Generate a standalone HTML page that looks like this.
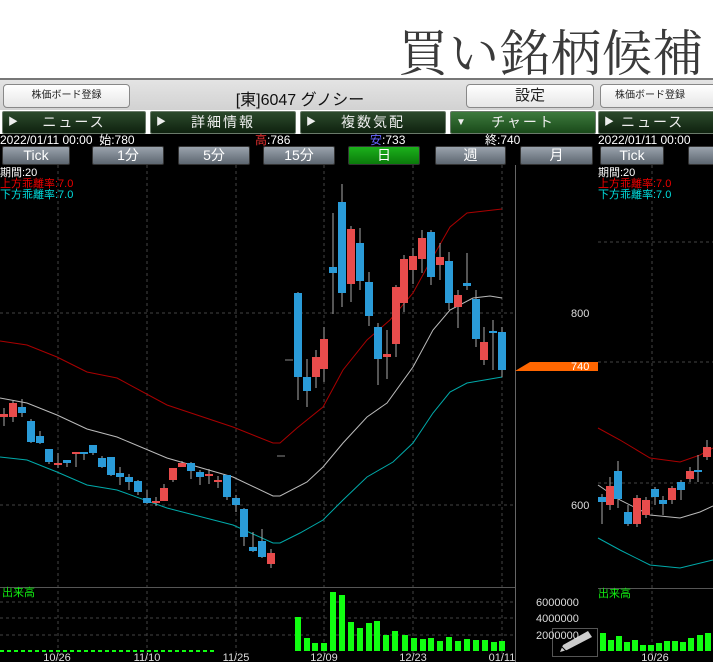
<!DOCTYPE html>
<html><head><meta charset="utf-8"><style>
*{margin:0;padding:0;box-sizing:border-box}
body{width:713px;height:662px;overflow:hidden;background:#fff;position:relative;font-family:"Liberation Sans","Noto Sans CJK JP",sans-serif}
.a{position:absolute}
.title{left:398px;top:14px;font-family:"Liberation Serif","Noto Serif CJK JP",serif;font-size:50px;color:#3a3a3a;letter-spacing:1px;white-space:nowrap}
.hdr{top:78px;height:32px;background:linear-gradient(#e4e4e4,#d2d2d2);border-top:2px solid #777}
.btn{background:linear-gradient(#fff,#e6e6e6);border:1px solid #888;border-radius:4px;color:#222;text-align:center}
.tab{top:111px;height:23px;background:linear-gradient(#2c4a2c,#0f220f);border:1px solid #6a7a6a;border-radius:2px;color:#eee;font-size:14px;line-height:21px}
.tab.on{background:linear-gradient(#3d7a3d,#1a4a1a)}
.tab i{font-style:normal;font-size:10px;position:absolute;left:5px;top:0}
.tab span{position:absolute;left:0;right:0;text-align:center;letter-spacing:2px}
.info{top:134px;height:12px;font-size:12px;line-height:12px;color:#fff;white-space:nowrap}
.pb{top:146px;height:19px;background:linear-gradient(#9aa3ad,#5d6670);border:1px solid #333;border-radius:2px;color:#fff;font-size:14px;line-height:17px;text-align:center}
.pb.on{background:linear-gradient(#1cb11c,#0b7a0b)}
.blk{background:#000}
</style></head><body>
<div class="a title">買い銘柄候補</div>
<div class="a blk" style="left:0;top:134px;width:713px;height:528px"></div>

<div class="a hdr" style="left:0;width:598px"></div>
<div class="a btn" style="left:3px;top:84px;width:127px;height:24px;font-size:10px;line-height:22px">株価ボード登録</div>
<div class="a" style="left:140px;top:86px;width:320px;text-align:center;font-size:16px;color:#111">[東]6047 グノシー</div>
<div class="a btn" style="left:466px;top:84px;width:128px;height:24px;font-size:15px;line-height:22px">設定</div>
<div class="a tab" style="left:2px;width:144px"><i>▶</i><span>ニュース</span></div>
<div class="a tab" style="left:150px;width:146px"><i>▶</i><span>詳細情報</span></div>
<div class="a tab" style="left:300px;width:146px"><i>▶</i><span>複数気配</span></div>
<div class="a tab on" style="left:450px;width:146px"><i>▼</i><span>チャート</span></div>
<div class="a info" style="left:0">2022/01/11 00:00 &nbsp;始:780</div>
<div class="a info" style="left:255px"><span style="color:#e33">高</span>:786</div>
<div class="a info" style="left:370px"><span style="color:#66f">安</span>:733</div>
<div class="a info" style="left:485px">終:740</div>
<div class="a pb" style="left:2px;width:68px">Tick</div>
<div class="a pb" style="left:92px;width:72px">1分</div>
<div class="a pb" style="left:178px;width:72px">5分</div>
<div class="a pb" style="left:263px;width:72px">15分</div>
<div class="a pb on" style="left:348px;width:72px">日</div>
<div class="a pb" style="left:435px;width:71px">週</div>
<div class="a pb" style="left:520px;width:73px">月</div>

<div class="a" style="left:598px;top:78px;width:115px;height:584px;overflow:hidden">
<div class="a hdr" style="left:0;top:0;width:115px"></div>
<div class="a btn" style="left:2px;top:6px;width:120px;height:24px;font-size:10px;line-height:22px;text-align:left;padding-left:14px">株価ボード登録</div>
<div class="a tab" style="left:0;top:33px;width:130px"><i>▶</i><span style="text-align:left;left:22px">ニュース</span></div>
<div class="a info" style="left:0;top:56px">2022/01/11 00:00</div>
<div class="a pb" style="left:2px;top:68px;width:64px">Tick</div>
<div class="a pb" style="left:90px;top:68px;width:40px"></div>
</div>

<svg class="a" style="left:0;top:0" width="713" height="662" xmlns="http://www.w3.org/2000/svg">
<rect x="0" y="165" width="713" height="497" fill="#000"/>
<g stroke="#444" stroke-dasharray="3,3" stroke-width="1">
<line x1="58" y1="165" x2="58" y2="662"/><line x1="147" y1="165" x2="147" y2="662"/><line x1="236" y1="165" x2="236" y2="662"/><line x1="324" y1="165" x2="324" y2="662"/><line x1="413" y1="165" x2="413" y2="662"/><line x1="502" y1="165" x2="502" y2="662"/>
<line x1="0" y1="313" x2="515" y2="313"/><line x1="0" y1="505" x2="515" y2="505"/>
<line x1="0" y1="602" x2="515" y2="602"/><line x1="0" y1="618" x2="515" y2="618"/><line x1="0" y1="635" x2="515" y2="635"/>
<line x1="652" y1="165" x2="652" y2="662"/><line x1="598" y1="242" x2="713" y2="242"/><line x1="598" y1="362" x2="713" y2="362"/><line x1="598" y1="483" x2="713" y2="483"/>
</g>
<line x1="515.5" y1="165" x2="515.5" y2="662" stroke="#666"/>
<line x1="0" y1="587.5" x2="515" y2="587.5" stroke="#555"/>
<line x1="598" y1="588.5" x2="713" y2="588.5" stroke="#555"/>
<line x1="0" y1="651" x2="215" y2="651" stroke="#1f1" stroke-dasharray="4,3" stroke-width="2"/>
<rect x="552.5" y="628.5" width="45" height="28" fill="none" stroke="#555"/>
<path d="M560 652 L563 645 L588 631 L592 637 L567 650 Z" fill="#ccc"/>
<line x1="562" y1="647" x2="566" y2="651" stroke="#000"/>
<g font-size="11" fill="#fff">
<text x="0" y="176">期間:20</text><text x="0" y="187" fill="#e00">上方乖離率:7.0</text><text x="0" y="198" fill="#0dd">下方乖離率:7.0</text>
<text x="598" y="176">期間:20</text><text x="598" y="187" fill="#e00">上方乖離率:7.0</text><text x="598" y="198" fill="#0dd">下方乖離率:7.0</text>
<text x="571" y="317" fill="#ddd">800</text><text x="571" y="509" fill="#ddd">600</text>
<text x="2" y="596" fill="#1e1">出来高</text><text x="598" y="597" fill="#1e1">出来高</text>
<text x="536" y="606" fill="#ddd">6000000</text><text x="536" y="622" fill="#ddd">4000000</text><text x="536" y="639" fill="#ddd">2000000</text>
</g>
<polygon points="515,371 530,362 598,362 598,371" fill="#f60"/>
<text x="571" y="370" font-size="11" fill="#fff">740</text>
<g fill="none" stroke-width="1">
<polyline stroke="#a00" points="0,341 27,345 57,357 87,372 117,378 167,405 233,427 273,443 280,443 297,428 323,407 343,370 367,340 390,320 413,293 430,262 450,227 467,213 502,209"/>
<polyline stroke="#bbb" points="0,398 27,403 57,415 87,429 117,437 167,458 233,477 273,496 280,496 307,482 323,467 343,443 367,417 387,403 413,367 433,330 450,310 473,298 490,296 502,298"/>
<polyline stroke="#0aa" points="0,457 27,460 57,472 87,485 117,490 167,508 233,525 273,543 280,543 300,533 323,520 343,500 367,477 393,462 413,443 433,413 450,392 467,383 502,377"/>
<polyline stroke="#a00" points="598,428 620,440 650,458 680,462 700,455 713,448"/>
<polyline stroke="#bbb" points="598,485 620,500 650,515 680,518 700,512 713,506"/>
<polyline stroke="#0aa" points="598,538 620,550 650,565 680,568 713,560"/>
</g>
<g id="c"></g>
<g fill="#1f1">
<rect x="295" y="617" width="6" height="34"/><rect x="304" y="638" width="6" height="13"/><rect x="312" y="643" width="6" height="8"/><rect x="321" y="643" width="6" height="8"/><rect x="330" y="592" width="6" height="59"/><rect x="339" y="595" width="6" height="56"/><rect x="348" y="622" width="6" height="29"/><rect x="357" y="628" width="6" height="23"/><rect x="366" y="623" width="6" height="28"/><rect x="374" y="621" width="6" height="30"/><rect x="383" y="635" width="6" height="16"/><rect x="392" y="631" width="6" height="20"/><rect x="402" y="635" width="6" height="16"/><rect x="411" y="638" width="6" height="13"/><rect x="420" y="639" width="6" height="12"/><rect x="428" y="638" width="6" height="13"/><rect x="437" y="641" width="6" height="10"/><rect x="446" y="637" width="6" height="14"/><rect x="455" y="641" width="6" height="10"/><rect x="464" y="639" width="6" height="12"/><rect x="473" y="640" width="6" height="11"/><rect x="482" y="640" width="6" height="11"/><rect x="491" y="642" width="6" height="9"/><rect x="499" y="641" width="6" height="10"/>
<rect x="600" y="633" width="6" height="18"/><rect x="608" y="640" width="6" height="11"/><rect x="616" y="636" width="6" height="15"/><rect x="624" y="642" width="6" height="9"/><rect x="632" y="640" width="6" height="11"/><rect x="640" y="645" width="6" height="6"/><rect x="648" y="645" width="6" height="6"/><rect x="656" y="643" width="6" height="8"/><rect x="664" y="641" width="6" height="10"/><rect x="672" y="641" width="6" height="10"/><rect x="680" y="642" width="6" height="9"/><rect x="688" y="638" width="6" height="13"/><rect x="697" y="635" width="6" height="16"/><rect x="705" y="633" width="6" height="18"/>
</g>
<g font-size="11" fill="#ddd" text-anchor="middle">
<text x="57" y="661">10/26</text><text x="147" y="661">11/10</text><text x="236" y="661">11/25</text><text x="324" y="661">12/09</text><text x="413" y="661">12/23</text><text x="502" y="661">01/11</text><text x="655" y="661">10/26</text>
</g>
</svg>
<script>
var R="#e84c4c",B="#2a9bd8";
var d=[[4,414,417,408,426,R],[13,403,417,400,422,R],[22,407,413,399,417,B],[31,421,442,419,443,B],[40,436,443,431,444,B],[49,449,462,449,464,B],[58,463,465,453,468,R],[67,460,463,460,467,B],[76,452,454,452,467,R],[84,452,454,452,460,B],[93,445,453,445,455,B],[102,458,467,456,468,B],[111,457,475,457,476,B],[120,473,477,467,485,B],[129,477,482,474,490,B],[138,481,492,480,495,B],[147,498,503,490,504,B],[156,501,503,497,506,R],[164,488,501,484,501,R],[173,468,480,468,482,R],[182,463,467,461,467,R],[191,463,471,462,479,B],[200,472,477,470,485,B],[209,474,476,469,484,R],[218,480,482,476,488,R],[227,475,497,475,500,B],[236,498,505,495,512,B],[244,509,537,508,546,B],[253,547,551,532,552,B],[262,541,557,529,558,B],[271,553,564,549,568,R],[298,293,377,292,400,B],[307,377,391,359,407,B],[316,357,377,350,388,R],[324,339,369,327,382,R],[333,267,273,213,314,B],[342,202,293,184,307,B],[351,229,284,226,302,R],[360,243,281,228,290,B],[369,282,316,272,326,B],[378,327,359,323,385,B],[387,354,357,330,379,R],[396,287,344,285,357,R],[404,259,303,255,312,R],[413,256,270,248,284,R],[422,238,259,230,273,R],[431,232,277,230,285,B],[440,257,265,243,280,R],[449,261,303,252,310,B],[458,295,307,290,328,R],[467,283,286,253,290,B],[476,299,339,290,347,B],[484,342,360,327,365,R],[493,331,333,320,370,B],[502,332,370,327,377,B],
[602,497,502,494,524,B],[610,486,505,477,510,R],[618,471,499,461,508,B],[628,512,524,505,526,B],[637,498,524,495,527,R],[646,500,515,497,518,R],[655,489,497,487,505,B],[663,500,504,496,515,B],[672,488,500,486,504,R],[681,482,490,480,500,B],[690,471,479,467,482,R],[698,470,470,455,482,B],[707,447,457,440,460,R]];
var s="";d.forEach(function(c){s+='<line x1="'+c[0]+'" y1="'+c[3]+'" x2="'+c[0]+'" y2="'+c[4]+'" stroke="#aaa"/>';s+='<rect x="'+(c[0]-4)+'" y="'+c[1]+'" width="8" height="'+Math.max(2,c[2]-c[1])+'" fill="'+c[5]+'"/>';});
s+='<line x1="277" y1="456" x2="285" y2="456" stroke="#888"/><line x1="285" y1="360" x2="293" y2="360" stroke="#888"/>';
document.getElementById("c").innerHTML=s;
</script>
</body></html>
